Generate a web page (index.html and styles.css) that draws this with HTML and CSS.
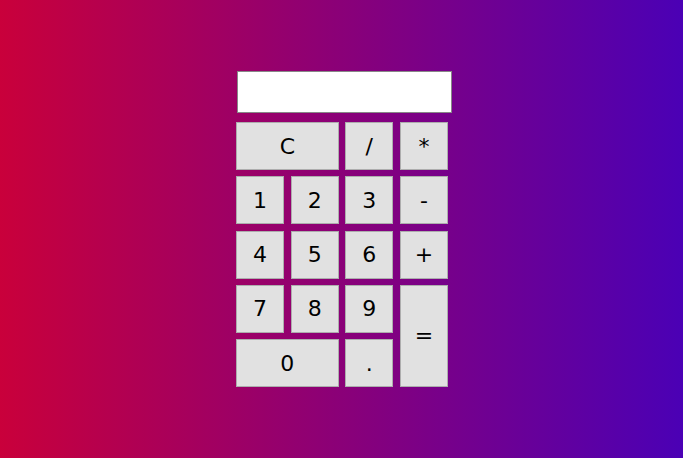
FILE: index.html
```html
<!DOCTYPE html>
<html>
<head>
<meta charset="utf-8">
<link rel="stylesheet" href="styles.css">
</head>
<body>
<div class="calc">
  <input class="display" type="text">
  <div class="keys">
    <button class="key wide">C</button>
    <button class="key">/</button>
    <button class="key">*</button>
    <button class="key">1</button>
    <button class="key">2</button>
    <button class="key">3</button>
    <button class="key">-</button>
    <button class="key">4</button>
    <button class="key">5</button>
    <button class="key">6</button>
    <button class="key">+</button>
    <button class="key">7</button>
    <button class="key">8</button>
    <button class="key">9</button>
    <button class="key tall">=</button>
    <button class="key wide">0</button>
    <button class="key">.</button>
  </div>
</div>
</body>
</html>
```
FILE: styles.css
```css
html, body {
  margin: 0;
  height: 100%;
}
body {
  background: linear-gradient(to right, #c9003b, #4b00b5);
  font-family: "DejaVu Sans", Verdana, sans-serif;
  display: flex;
  justify-content: center;
  padding-top: 71px;
  box-sizing: border-box;
}
.calc {
  display: flex;
  flex-direction: column;
  align-items: flex-start;
  gap: 9px;
  margin-left: 5px;
}
.display {
  width: 215px;
  height: 42px;
  box-sizing: border-box;
  margin: 0 0 0 1px;
  border: 1px solid #888;
  background: #fff;
  padding: 0 4px;
  font-size: 20px;
}
.keys {
  display: grid;
  grid-template-columns: 48px 48px 48px 48px;
  grid-auto-rows: 48px;
  column-gap: 6.67px;
  row-gap: 6.25px;
}
.key {
  margin: 0;
  padding: 0;
  background: #e1e1e1;
  border: 1px solid #adadad;
  font-family: "DejaVu Sans", Verdana, sans-serif;
  font-size: 22px;
  color: #000;
}
.wide { grid-column: span 2; }
.tall { grid-row: span 2; }
```
